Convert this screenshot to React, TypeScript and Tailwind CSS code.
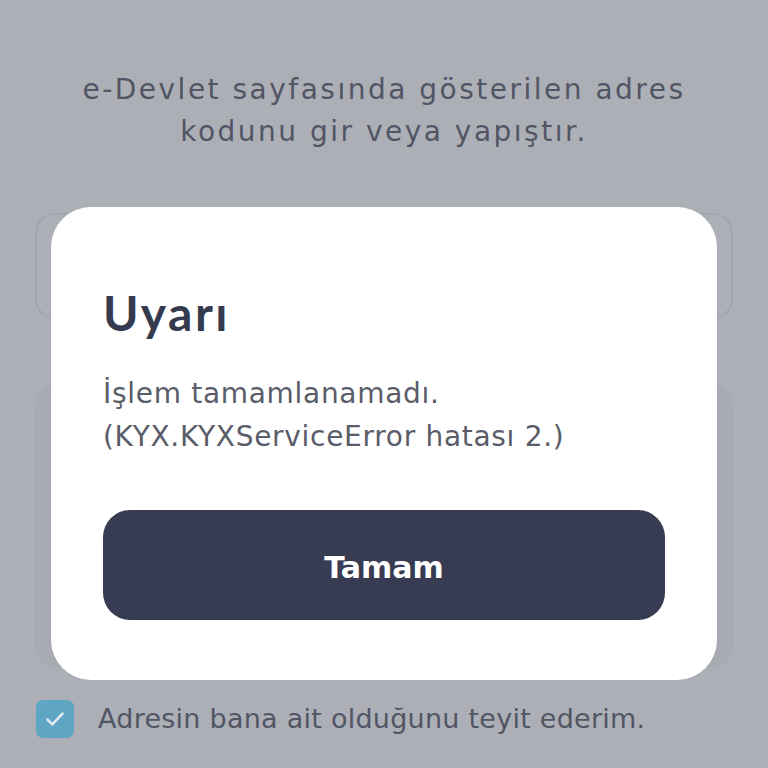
import React from "react";

export default function App() {
  return (
    <div
      className="relative w-[768px] h-[768px] overflow-hidden bg-[#adafb7]"
      style={{ fontFamily: "'DejaVu Sans', 'Noto Sans', sans-serif" }}
    >
      <div className="flex flex-col px-[35px] pt-[69px]">
        <p className="text-center text-[28px] leading-[42px] tracking-[2.5px] text-[#525564]">
          e-Devlet sayfasında gösterilen adres
          <br />
          kodunu gir veya yapıştır.
        </p>
        <div className="mt-[60px] h-[106px] rounded-[20px] border-2 border-[#a3a5ad]" />
        <div className="mt-[66px] h-[282px] rounded-[20px] bg-[#a8aab2]" />
        <div className="mt-[33px] flex items-center gap-[24px] pl-[1px]">
          <div className="flex h-[38px] w-[38px] items-center justify-center rounded-[7px] bg-[#5fa5c4]">
            <svg width="26" height="26" viewBox="0 0 24 24" fill="none">
              <path
                d="M5 12.5l4.5 4.5L19 7"
                stroke="#dfe9ee"
                strokeWidth="2.4"
                strokeLinecap="round"
                strokeLinejoin="round"
              />
            </svg>
          </div>
          <span className="text-[27px] leading-[38px] tracking-[0.25px] text-[#525564]">
            Adresin bana ait olduğunu teyit ederim.
          </span>
        </div>
      </div>

      <div className="absolute left-[51px] top-[207px] flex h-[473px] w-[666px] flex-col rounded-[40px] bg-white px-[52px] pt-[82px]">
        <h1
          className="text-[48px] font-bold leading-[48px] tracking-[2.5px] text-[#363a4f]"
          style={{ fontFamily: "Lato, sans-serif" }}
        >
          Uyarı
        </h1>
        <p className="mt-[35px] text-[28px] leading-[43px] tracking-[0.7px] text-[#5a5d68]">
          İşlem tamamlanamadı.
          <br />
          (KYX.KYXServiceError hatası 2.)
        </p>
        <button className="mt-auto mb-[60px] flex h-[110px] w-full items-center justify-center rounded-[27px] bg-[#383c52] pt-[4px] text-[30px] font-bold text-white">
          Tamam
        </button>
      </div>
    </div>
  );
}
